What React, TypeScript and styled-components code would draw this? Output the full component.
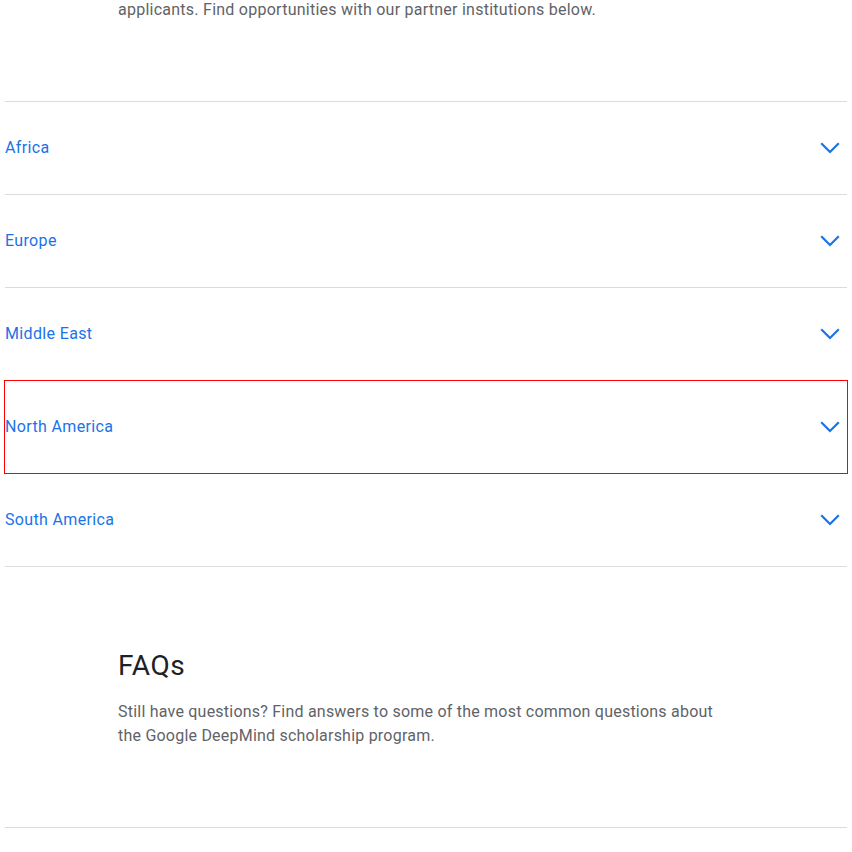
import React from 'react';
import styled, { createGlobalStyle } from 'styled-components';

const GlobalStyle = createGlobalStyle`
    html, body {
        margin: 0;
        padding: 0;
        background: #fff;
    }
    body {
        font-family: Roboto, "Liberation Sans", Arial, sans-serif;
        -webkit-font-smoothing: antialiased;
    }
`;

const Page = styled.div`
    padding: 0 5px;
    overflow: hidden;
`;

const Intro = styled.p`
    margin: -2px 0 79px 113px;
    font-size: 16px;
    line-height: 24px;
    letter-spacing: 0.25px;
    color: #5f6368;
`;

const Accordion = styled.div`
    border-bottom: 1px solid #dadce0;
`;

const Item = styled.div`
    border-top: 1px solid #dadce0;
`;

const Trigger = styled.button<{ $focused?: boolean }>`
    display: flex;
    align-items: center;
    justify-content: space-between;
    width: 100%;
    height: 92px;
    padding: 0 7px 0 0;
    margin: 0;
    border: 0;
    background: transparent;
    font-family: Roboto, "Liberation Sans", Arial, sans-serif;
    font-size: 16px;
    line-height: 24px;
    letter-spacing: 0.35px;
    color: #1a73e8;
    text-align: left;
    cursor: pointer;
    outline: ${p => (p.$focused ? '1px solid #ff0000' : 'none')};
    outline-offset: 0;
`;

const Chevron = styled.svg`
    width: 20px;
    height: 12px;
    flex: none;
`;

const Faq = styled.section`
    padding: 81px 0 79px 113px;
    border-bottom: 1px solid #dadce0;
`;

const Heading = styled.h2`
    margin: 0 0 16px;
    font-size: 28px;
    line-height: 36px;
    font-weight: 400;
    letter-spacing: 0.6px;
    color: #202124;
`;

const Lead = styled.p`
    margin: 0;
    max-width: 610px;
    font-size: 16px;
    line-height: 24px;
    letter-spacing: 0.22px;
    color: #5f6368;
`;

const Tail = styled.div`
    height: 60px;
`;

const regions = ['Africa', 'Europe', 'Middle East', 'North America', 'South America'];

const App: React.FC = () => {
    return (
        <>
            <GlobalStyle />
            <Page>
                <Intro>applicants. Find opportunities with our partner institutions below.</Intro>
                <Accordion>
                    {regions.map(region => (
                        <Item key={region}>
                            <Trigger $focused={region === 'North America'}>
                                <span>{region}</span>
                                <Chevron viewBox="0 0 20 12" aria-hidden="true">
                                    <polyline points="2,2 10,10 18,2" fill="none" stroke="#1a73e8" strokeWidth="2.2" strokeLinecap="square" />
                                </Chevron>
                            </Trigger>
                        </Item>
                    ))}
                </Accordion>
                <Faq>
                    <Heading>FAQs</Heading>
                    <Lead>
                        Still have questions? Find answers to some of the most common questions about
                        the Google DeepMind scholarship program.
                    </Lead>
                </Faq>
                <Tail />
            </Page>
        </>
    );
};

export default App;
